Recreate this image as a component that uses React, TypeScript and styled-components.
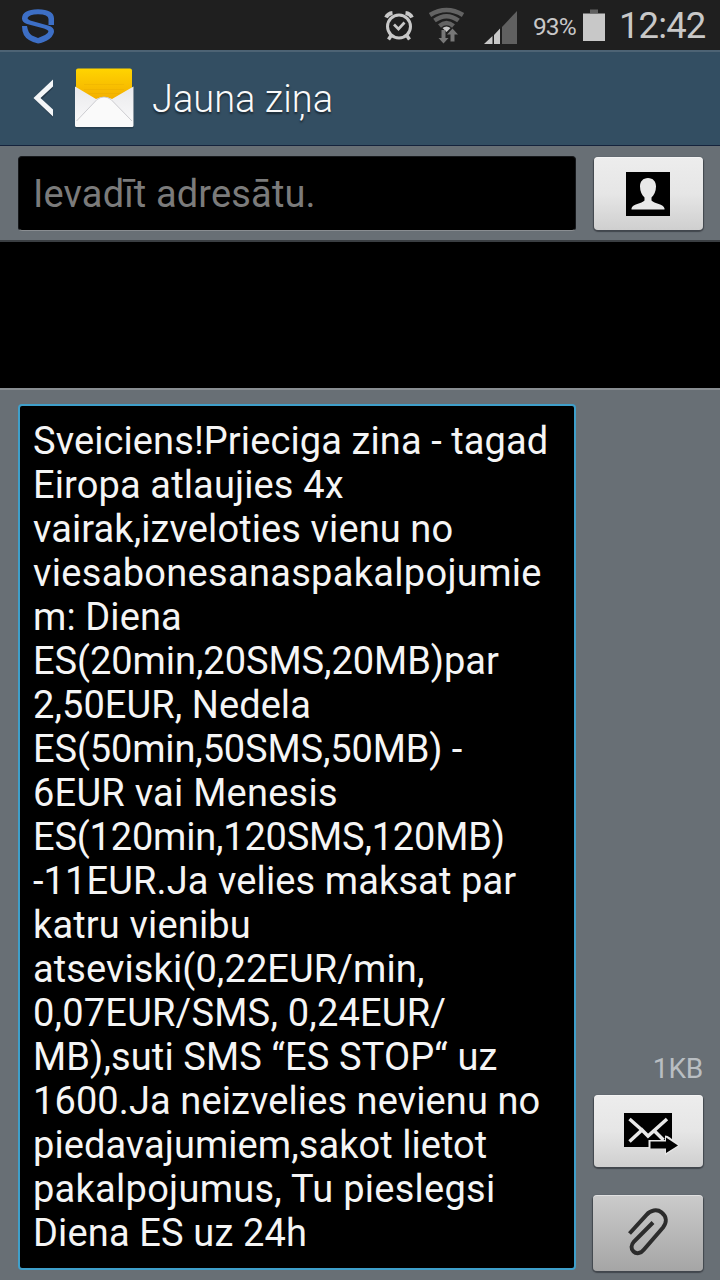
import React from "react";
import styled, { createGlobalStyle } from "styled-components";

const GlobalStyle = createGlobalStyle`
  html, body { margin: 0; padding: 0; background: #000; }
  * { box-sizing: border-box; }
`;

const Screen = styled.div`
  width: 720px;
  height: 1280px;
  display: flex;
  flex-direction: column;
  overflow: hidden;
  background: #000;
  font-family: Roboto, "Noto Sans", sans-serif;
`;

const StatusBar = styled.div`
  height: 50px;
  flex: none;
  display: flex;
  align-items: flex-start;
  background: #1f1f1f;
  color: #c8c8c8;
  svg { display: block; flex: none; }
`;

const StatusSpacer = styled.div`
  flex: 1;
`;

const StatusText = styled.span<{ $size: number; $spacing: number; $width: number; $top: number }>`
  width: ${(p) => p.$width}px;
  margin-top: ${(p) => p.$top}px;
  font-size: ${(p) => p.$size}px;
  letter-spacing: ${(p) => p.$spacing}px;
  line-height: 30px;
  white-space: nowrap;
`;

const Header = styled.header`
  height: 96px;
  flex: none;
  display: flex;
  align-items: flex-start;
  background: #334e62;
  border-top: 2px solid #4d6374;
  border-bottom: 1px solid #15233c;
  svg { display: block; flex: none; }
`;

const Title = styled.h1`
  margin: 25px 0 0 16px;
  font-size: 38px;
  font-weight: 300;
  line-height: 44px;
  color: #fafafa;
  text-shadow: 0 2px 2px rgba(0, 0, 0, 0.5);
`;

const RecipientBar = styled.div`
  height: 96px;
  flex: none;
  display: flex;
  align-items: flex-start;
  padding: 10px 17px 0 18px;
  gap: 18px;
  background: #686f75;
  border-bottom: 2px solid #3a3e42;
  button { margin-top: 1px; }
`;

const RecipientField = styled.div`
  width: 558px;
  height: 75px;
  padding-left: 14px;
  border-radius: 4px;
  background: #000;
  border: 1px solid #16181b;
  border-bottom-color: #8a8e92;
  color: #7b7b7b;
  font-size: 38px;
  line-height: 75px;
  letter-spacing: 0.15px;
  white-space: nowrap;
`;

const KeyButton = styled.button<{ $width: number; $height: number; $shaded?: boolean }>`
  width: ${(p) => p.$width}px;
  height: ${(p) => p.$height}px;
  flex: none;
  display: flex;
  align-items: center;
  justify-content: center;
  padding: 0;
  border: 0;
  border-radius: 4px;
  background: ${(p) =>
    p.$shaded ? "linear-gradient(#cbcbcb, #a5a5a5)" : "linear-gradient(#ededed, #e6e6e6 50%, #cfcfcf)"};
  box-shadow: inset 0 1px 0 rgba(255, 255, 255, 0.4), 0 1px 1px 1px rgba(40, 44, 50, 0.6);
  svg { display: block; flex: none; }
`;

const Conversation = styled.div`
  height: 146px;
  flex: none;
  background: #000;
`;

const Composer = styled.div`
  flex: 1;
  display: flex;
  justify-content: space-between;
  padding: 14px 17px 9px 18px;
  background: #686f75;
  border-top: 2px solid #888d91;
`;

const MessageField = styled.div`
  width: 558px;
  height: 866px;
  padding: 13px 0 0 13px;
  border: 2px solid #3f9fca;
  border-radius: 4px;
  background: #000;
  color: #f5f5f5;
`;

const Line = styled.div<{ $spacing: number }>`
  height: 44px;
  font-size: 38px;
  line-height: 44px;
  letter-spacing: ${(p) => p.$spacing}px;
  white-space: nowrap;
`;

const Actions = styled.div`
  display: flex;
  flex-direction: column;
  align-items: flex-end;
  justify-content: flex-end;
`;

const SizeLabel = styled.span`
  margin-bottom: 9px;
  font-size: 28px;
  line-height: 34px;
  letter-spacing: -0.2px;
  color: #b9bec2;
`;

const ButtonGap = styled.div`
  height: 28px;
`;

const lines: [string, number][] = [
  ["Sveiciens!Prieciga zina - tagad", 0.1],
  ["Eiropa atlaujies 4x", 0.13],
  ["vairak,izveloties vienu no", 0.1],
  ["viesabonesanaspakalpojumie", 0.31],
  ["m: Diena", 0.1],
  ["ES(20min,20SMS,20MB)par", -0.06],
  ["2,50EUR, Nedela", 0.07],
  ["ES(50min,50SMS,50MB) -", -0.14],
  ["6EUR vai Menesis", 0.25],
  ["ES(120min,120SMS,120MB)", -0.2],
  ["-11EUR.Ja velies maksat par", 0.11],
  ["katru vienibu", 0.15],
  ["atseviski(0,22EUR/min,", 0.1],
  ["0,07EUR/SMS, 0,24EUR/", 0.2],
  ["MB),suti SMS “ES STOP“ uz", 0.12],
  ["1600.Ja neizvelies nevienu no", 0.1],
  ["piedavajumiem,sakot lietot", 0.06],
  ["pakalpojumus, Tu pieslegsi", 0.27],
  ["Diena ES uz 24h", 0.15],
];

const ShieldIcon = () => (
  <svg width="60" height="50" viewBox="0 0 60 50">
    <path
      d="M54 25H48.500V19Q48.500 14.200 38 14.200Q29 14.200 27.500 18Q28 20 32 21L48 25.500Q54.500 27 54 32Q53 37 47 40.500Q41 43.500 38 43.500Q34 43 29 40Q22 36 22 26H27Q28 33 32 35.500L38 38L45 35Q48.500 33 48.500 31Q47.500 29.500 44 28.500L27 24Q22 22 22 18.500Q22 9.500 38 9.200Q54 9.500 54 18.500z"
      fill="#3d6fc6"
    />
  </svg>
);

const AlarmIcon = () => (
  <svg width="60" height="50" viewBox="368 0 60 50" fill="none" stroke="#c8c8c8" strokeWidth="3">
    <circle cx="399" cy="26.5" r="11.5" />
    <path d="M394 24.500l4.5 4.500 6-6.500" strokeWidth="2.7" />
    <path d="M386 17.500q2-4 6.500-4.500M412 17.500q-2-4-6.500-4.500" strokeWidth="3.800" />
    <path d="M391.500 35l-3 4.500M406.500 35l3 4.500" strokeWidth="3.500" />
  </svg>
);

const WifiIcon = () => (
  <svg width="52" height="50" viewBox="428 0 52 50" fill="none">
    <g stroke="#636363" strokeWidth="4.500">
      <path d="M430 15Q446.500 5 463 15" />
      <path d="M434.500 20.500Q446.500 12 458.500 20.500" />
      <path d="M439.500 26Q446.500 20 453.500 26" />
    </g>
    <path d="M442.500 28Q446.500 25 450.500 28L446.500 32z" fill="#c8c8c8" />
    <path d="M441.500 30h4v8h3l-5 5.500-5-5.500h3zM450.500 41.500h4v-7h3.500l-5.500-6-5.500 6h3.500z" fill="#777" />
  </svg>
);

const SignalIcon = () => (
  <svg width="53" height="50" viewBox="480 0 53 50">
    <path d="M484 44L492.500 36V44zM494 35L500 28.500V44H494z" fill="#c8c8c8" />
    <path d="M502 27L517 11V44H502z" fill="#606060" />
  </svg>
);

const BatteryIcon = () => (
  <svg width="38" height="50" viewBox="581 0 38 50">
    <path d="M590 9.500h8V13h-8z" fill="#606060" />
    <path d="M583 13.500h22V41h-22z" fill="#c8c8c8" />
  </svg>
);

const BackIcon = () => (
  <svg width="74" height="93" viewBox="0 52 74 93">
    <path d="M53 81L35 99.500L53 118V111L41.500 99.500L53 88z" fill="#1c2c3a" opacity=".6" />
    <path d="M53 79.500L33.500 98L53 116.500V109.500L40.500 98L53 86.500z" fill="#f4f6f8" />
  </svg>
);

const EnvelopeIcon = () => (
  <svg width="62" height="93" viewBox="74 52 62 93">
    <defs>
      <linearGradient id="sheet" x1="0" y1="0" x2="0" y2="1">
        <stop offset="0" stopColor="#ffd400" />
        <stop offset="1" stopColor="#f2a900" />
      </linearGradient>
      <linearGradient id="paper" x1="0" y1="0" x2="0" y2="1">
        <stop offset="0" stopColor="#e9e9ec" />
        <stop offset="1" stopColor="#fbfbfb" />
      </linearGradient>
    </defs>
    <rect x="75" y="88" width="59" height="40.500" rx="2" fill="#203443" opacity=".6" />
    <rect x="76" y="68.500" width="56" height="36" rx="2" fill="url(#sheet)" />
    <path d="M84 84.500h40M84 89.500h40M88 93.500h32" stroke="#d99d00" strokeWidth=".5" opacity=".4" />
    <path d="M75 86.500L96 99Q104 95 112 99L133.500 86.500V125.500Q133.500 127 132 127H76.500Q75 127 75 125.500z" fill="url(#paper)" />
    <path d="M76.500 121L97 99.500Q104 94.500 111 99.500L132 121V127H76.500z" fill="#fafafa" />
    <path d="M76.500 121L97 99.500Q104 94.500 111 99.500L132 121" fill="none" stroke="#c2c2c6" strokeWidth=".8" />
  </svg>
);

const ContactIcon = () => (
  <svg width="109" height="73" viewBox="594 157 109 73">
    <path d="M626 172h44v44h-44z" fill="#000" />
    <path
      transform="translate(626 171)"
      d="M22 7C17 7 14 10.500 14 15.500C14 20.500 16 24 18.500 26.500V29.500C16 32.500 6 33 5.500 37.500V38.500H38.500V37.500C38 33 28 32.500 25.500 29.500V26.500C28 24 30 20.500 30 15.500C30 10.500 27 7 22 7z"
      fill="#e8e8e8"
    />
  </svg>
);

const SendIcon = () => (
  <svg width="109" height="72" viewBox="594 1095 109 72">
    <path d="M624 1113h48v34h-48z" fill="#000" />
    <path d="M629.500 1119l13 11.500M667 1119l-19 17-6-6L629.500 1141.500M653.500 1130l10 10" fill="none" stroke="#e8e8e8" strokeWidth="3.500" />
    <path d="M648.500 1140h16.500v-4.500q2.500 0 5 2l10 8-15 10v-7h-16.500z" fill="#e6e6e6" />
    <path d="M650.500 1141.500h15.500v-4l12 8-12 7.500v-4.500h-15.500z" fill="#000" />
  </svg>
);

const ClipIcon = () => (
  <svg width="110" height="76" viewBox="593 1195 110 76" fill="none">
    <path
      d="M629.500 1233.500L646.500 1214.800C650.500 1210.200 657 1208.800 661.500 1212.300C667 1216.600 666.800 1222.500 663 1227.500L644 1249.500C640.800 1253.500 636.500 1254.300 633.500 1251.500C630.700 1248.800 631 1245 634 1241.500L653 1222.500"
      stroke="#2c2c2c"
      strokeWidth="4"
    />
  </svg>
);

export default function App() {
  return (
    <Screen>
      <GlobalStyle />
      <StatusBar>
        <ShieldIcon />
        <StatusSpacer />
        <AlarmIcon />
        <WifiIcon />
        <SignalIcon />
        <StatusText $size={24.5} $spacing={-0.9} $width={48} $top={12}>93%</StatusText>
        <BatteryIcon />
        <StatusText $size={36.5} $spacing={-0.9} $width={101} $top={11}>12:42</StatusText>
      </StatusBar>
      <Header>
        <BackIcon />
        <EnvelopeIcon />
        <Title>Jauna ziņa</Title>
      </Header>
      <RecipientBar>
        <RecipientField>Ievadīt adresātu.</RecipientField>
        <KeyButton $width={109} $height={73} aria-label="Kontakti">
          <ContactIcon />
        </KeyButton>
      </RecipientBar>
      <Conversation />
      <Composer>
        <MessageField>
          {lines.map(([text, spacing]) => (
            <Line key={text} $spacing={spacing}>{text}</Line>
          ))}
        </MessageField>
        <Actions>
          <SizeLabel>1KB</SizeLabel>
          <KeyButton $width={109} $height={72} aria-label="Sūtīt">
            <SendIcon />
          </KeyButton>
          <ButtonGap />
          <KeyButton $width={110} $height={76} $shaded aria-label="Pievienot">
            <ClipIcon />
          </KeyButton>
        </Actions>
      </Composer>
    </Screen>
  );
}
